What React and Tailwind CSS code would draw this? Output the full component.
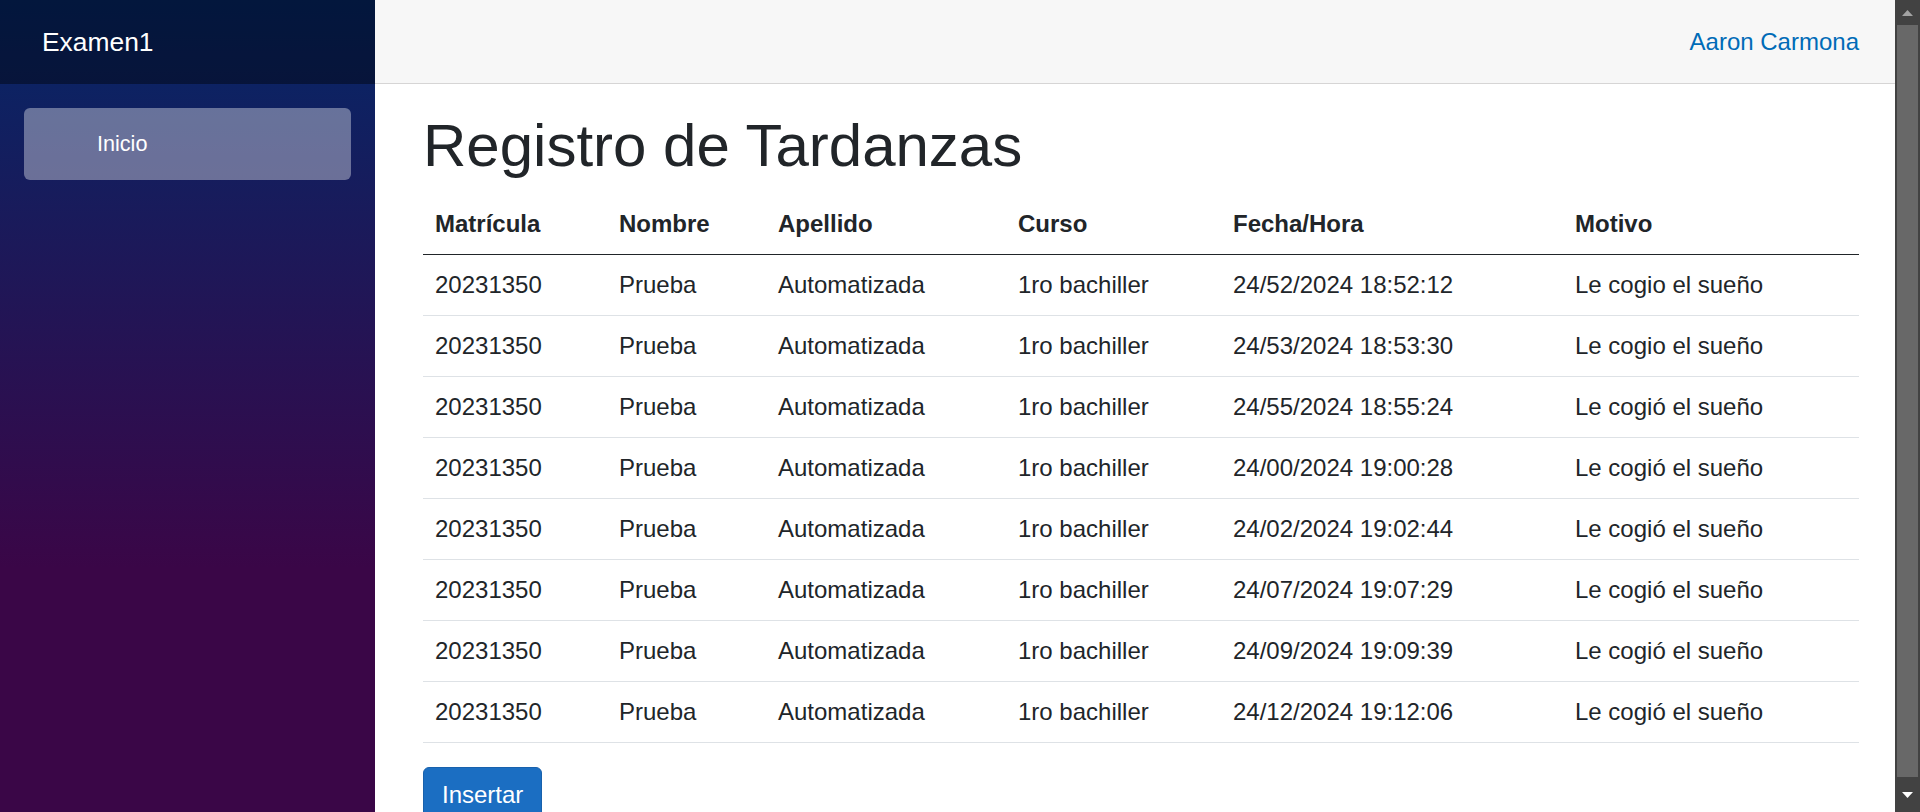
import React from 'react';

const rows = [
    ['24/52/2024 18:52:12', 'Le cogio el sueño'],
    ['24/53/2024 18:53:30', 'Le cogio el sueño'],
    ['24/55/2024 18:55:24', 'Le cogió el sueño'],
    ['24/00/2024 19:00:28', 'Le cogió el sueño'],
    ['24/02/2024 19:02:44', 'Le cogió el sueño'],
    ['24/07/2024 19:07:29', 'Le cogió el sueño'],
    ['24/09/2024 19:09:39', 'Le cogió el sueño'],
    ['24/12/2024 19:12:06', 'Le cogió el sueño'],
];

const headers = ['Matrícula', 'Nombre', 'Apellido', 'Curso', 'Fecha/Hora', 'Motivo'];

const App = () => {
    return (
        <div className="flex h-[812px] overflow-hidden bg-white text-[#212529] font-['Liberation_Sans',Arial,sans-serif]">
            {/* Sidebar */}
            <aside className="w-[375px] shrink-0 h-full bg-[linear-gradient(180deg,#052767_0%,#3a0647_70%)]">
                <div className="h-[84px] bg-black/40 flex items-center pl-[42px]">
                    <span className="text-[26.4px] text-white leading-none">Examen1</span>
                </div>
                <nav className="px-6 pt-6">
                    <div className="h-[72px] rounded-[6px] bg-white/[0.37] flex items-center pl-[73px] text-white text-[21.6px]">
                        Inicio
                    </div>
                </nav>
            </aside>

            {/* Main */}
            <main className="flex-1 flex flex-col min-w-0">
                <div className="h-[84px] shrink-0 bg-[#f7f7f7] border-b border-[#d6d5d5] flex items-center justify-end pr-9">
                    <a className="text-[24px] text-[#006bb7] leading-none">Aaron Carmona</a>
                </div>
                <article className="pl-12 pr-9 pt-[26px]">
                    <h1 className="text-[60px] leading-[1.2] mb-3">Registro de Tardanzas</h1>
                    <table className="w-full table-fixed mb-6 text-[24px] leading-[36px]">
                        <colgroup>
                            <col className="w-[184px]" />
                            <col className="w-[159px]" />
                            <col className="w-[240px]" />
                            <col className="w-[215px]" />
                            <col className="w-[342px]" />
                            <col />
                        </colgroup>
                        <thead>
                            <tr className="border-b-[1.5px] border-[#212529]">
                                {headers.map((h) => (
                                    <th key={h} className="px-3 py-3 text-left font-bold">{h}</th>
                                ))}
                            </tr>
                        </thead>
                        <tbody>
                            {rows.map((r, i) => (
                                <tr key={i} className="border-b border-[#dee2e6]">
                                    <td className="px-3 py-3">20231350</td>
                                    <td className="px-3 py-3">Prueba</td>
                                    <td className="px-3 py-3">Automatizada</td>
                                    <td className="px-3 py-3">1ro bachiller</td>
                                    <td className="px-3 py-3">{r[0]}</td>
                                    <td className="px-3 py-3">{r[1]}</td>
                                </tr>
                            ))}
                        </tbody>
                    </table>
                    <button className="bg-[#1b6ec2] border border-[#1861ac] text-white text-[24px] leading-[36px] px-[18px] py-[9px] rounded-[6px]">
                        Insertar
                    </button>
                </article>
            </main>

            {/* Scrollbar */}
            <div className="w-[25px] shrink-0 h-full bg-[#424242] flex flex-col">
                <div className="h-[25px] flex items-center justify-center">
                    <svg width="11" height="6" viewBox="0 0 11 6"><path d="M5.5 0L11 6H0z" fill="#a3a3a3" /></svg>
                </div>
                <div className="flex-1 mx-[2px] bg-[#686868]" />
                <div className="h-[35px] flex items-center justify-center">
                    <svg width="11" height="6" viewBox="0 0 11 6"><path d="M0 0h11L5.5 6z" fill="#ffffff" /></svg>
                </div>
            </div>
        </div>
    );
};

export default App;
